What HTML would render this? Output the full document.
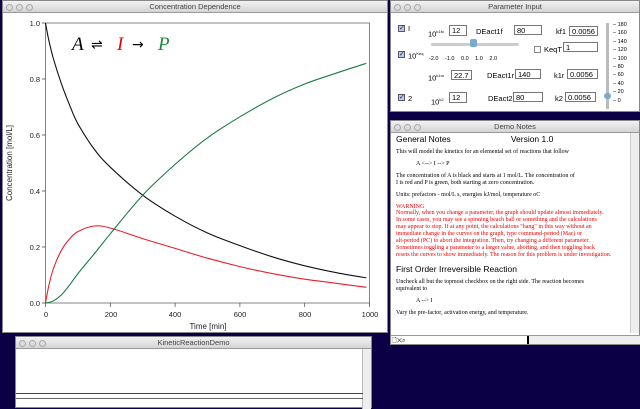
<!DOCTYPE html>
<html><head><meta charset="utf-8"><style>
*{margin:0;padding:0;box-sizing:border-box}
body{width:640px;height:408px;background:#0b0046;position:relative;overflow:hidden;font-family:"Liberation Sans",sans-serif}
.win{position:absolute;background:#fff;border:1px solid #888}
.tb{height:12px;background:linear-gradient(#f2f2f2,#d4d4d4);border-bottom:1px solid #999;font-size:7.5px;color:#444;text-align:center;line-height:12px;position:relative}
.dots{position:absolute;left:3px;top:2px}
.dots i{display:inline-block;width:7px;height:7px;border-radius:50%;background:#ddd;border:1px solid #aaa;margin-right:3px}
.a{position:absolute;white-space:nowrap}
.in{position:absolute;border:1px solid #777;background:#fff;font-size:7.5px;padding-left:2px;height:10px;line-height:9px}
.cb{position:absolute;width:7px;height:7px;border:1px solid #557;background:#bcd;font-size:7px;line-height:6px;color:#124}
.notes{font-family:"Liberation Serif",serif;font-size:6px;line-height:6.9px}
</style></head><body>

<div class="win" style="left:2px;top:0;width:386px;height:333px">
<div class="tb"><span class="dots"><i></i><i></i><i></i></span>Concentration Dependence</div>
<svg width="386" height="320" style="position:absolute;left:-1px;top:12px" font-family="Liberation Sans" font-size="7.5" fill="#222">
<rect x="43.5" y="10" width="324" height="280" fill="none" stroke="#666" stroke-width="0.8"/>
<g stroke="#444" stroke-width="0.7">
<path d="M40 10H43.5M40 66H43.5M40 122H43.5M40 178H43.5M40 234H43.5M40 290H43.5"/>
<path d="M43.5 290V294M108.3 290V294M173.1 290V294M237.9 290V294M302.7 290V294M367.5 290V294"/>
</g>
<g text-anchor="end">
<text x="38" y="13">1.0</text><text x="38" y="69">0.8</text><text x="38" y="125">0.6</text><text x="38" y="181">0.4</text><text x="38" y="237">0.2</text><text x="38" y="293">0.0</text></g>
<g text-anchor="middle">
<text x="44" y="304">0</text><text x="109" y="304">200</text><text x="173" y="304">400</text><text x="238" y="304">600</text><text x="303" y="304">800</text><text x="368" y="304">1000</text>
<text x="206" y="316" font-size="8">Time [min]</text></g>
<text transform="translate(10,150) rotate(-90)" text-anchor="middle" font-size="8">Concentration [mol/L]</text>
<text x="70" y="37" font-family="Liberation Serif" font-style="italic" font-size="19" fill="#000">A</text>
<text x="89" y="36" font-family="DejaVu Sans" font-size="14" fill="#000">⇌</text>
<text x="115" y="37" font-family="Liberation Serif" font-style="italic" font-size="19" fill="#e00">I</text>
<text x="130" y="36" font-family="DejaVu Sans" font-size="14" fill="#000">→</text>
<text x="156" y="37" font-family="Liberation Serif" font-style="italic" font-size="19" fill="#1a8a3a">P</text>
<g id="curves" fill="none" stroke-width="1.1"></g>
</svg>
</div>

<div class="win" style="left:15px;top:336px;width:357px;height:72px">
<div class="tb"><span class="dots"><i></i><i></i><i></i></span>KineticReactionDemo</div>
<div class="a" style="right:0;top:12px;width:9px;height:60px;background:#eee;border-left:1px solid #bbb"></div>
<div class="a" style="left:0;top:56px;width:347px;height:1px;background:#444"></div>
<div class="a" style="left:0;top:61px;width:347px;height:1px;background:#666"></div>
</div>

<div class="win" style="left:390px;top:0;width:250px;height:112px;font-size:7.5px">
<div class="tb"><span class="dots"><i></i><i></i><i></i></span>Parameter Input</div>
<div class="cb" style="left:7px;top:24px">✓</div><div class="a" style="left:17px;top:23px">I</div>
<div class="cb" style="left:7px;top:50px">✓</div><div class="a" style="left:17px;top:50px">10<sup style="font-size:4px">Keq</sup></div>
<div class="cb" style="left:7px;top:93px">✓</div><div class="a" style="left:17px;top:93px">2</div>
<div class="a" style="left:37px;top:28px">10<sup style="font-size:4px">k1fo</sup></div>
<div class="in" style="left:58px;top:24px;width:18px;height:11px">12</div>
<div class="a" style="left:85px;top:26px">DEact1f</div><div class="in" style="left:123px;top:24px;width:28px">80</div>
<div class="a" style="left:165px;top:26px">kf1</div><div class="in" style="left:178px;top:25px;width:29px">0.0056</div>
<div class="a" style="left:40px;top:42px;width:88px;height:3px;background:#ccc;border-radius:2px"></div>
<div class="a" style="left:79px;top:38px;width:7px;height:8px;background:#7ac;border-radius:2px"></div>
<div class="a" style="left:38px;top:55px;font-size:5.5px;word-spacing:5px">-2.0 -1.0 0.0 1.0 2.0</div>
<div class="a" style="left:143px;top:45px;width:7px;height:7px;border:1px solid #888"></div>
<div class="a" style="left:153px;top:44px">KeqT</div><div class="in" style="left:172px;top:41px;width:35px">1</div>
<div class="a" style="left:37px;top:72px">10<sup style="font-size:4px">k1ro</sup></div>
<div class="in" style="left:60px;top:69px;width:21px">22.7</div>
<div class="a" style="left:96px;top:70px">DEact1r</div><div class="in" style="left:124px;top:68px;width:26px">140</div>
<div class="a" style="left:163px;top:70px">k1r</div><div class="in" style="left:176px;top:68px;width:31px">0.0056</div>
<div class="a" style="left:40px;top:96px">10<sup style="font-size:4px">k2</sup></div>
<div class="in" style="left:58px;top:91px;width:18px;height:11px">12</div>
<div class="a" style="left:97px;top:93px">DEact2</div><div class="in" style="left:122px;top:91px;width:30px">80</div>
<div class="a" style="left:164px;top:93px">k2</div><div class="in" style="left:174px;top:91px;width:31px">0.0056</div>
<div class="a" style="left:215px;top:22px;width:3px;height:86px;background:#bbb"></div>
<div class="a" style="left:213px;top:92px;width:7px;height:6px;background:#7ac;border-radius:3px"></div>
<div class="a" style="left:222px;top:20px;font-size:5.5px;line-height:8.4px">– 180<br>– 160<br>– 140<br>– 120<br>– 100<br>– 80<br>– 60<br>– 40<br>– 20<br>– 0</div>
</div>

<div class="win" style="left:390px;top:120px;width:250px;height:225px">
<div class="tb"><span class="dots"><i></i><i></i><i></i></span>Demo Notes</div>
<div class="a" style="right:0;top:12px;width:9px;height:200px;background:#eee;border-left:1px solid #ccc"></div>
<div class="a" style="left:0;bottom:0;width:250px;height:9px;background:#eee;border-top:1px solid #999"></div>
<div class="a" style="left:1px;bottom:0;width:137px;height:8px;background:#fff;border-right:2px solid #000;font-size:6px">🗋✕⌕</div>
<div class="a notes" style="left:5px;top:13px;width:235px">
<div style="font-family:'Liberation Sans';font-size:8.5px;line-height:11px">General Notes<span style="margin-left:60px">Version 1.0</span></div>
<div style="margin-top:4px">This will model the kinetics for an elemental set of reactions that follow</div>
<div style="margin:5px 0 0 20px">A &lt;--&gt; I --&gt; P</div>
<div style="margin-top:5px">The concentration of A is black and starts at 1 mol/L. The concentration of<br>I is red and P is green, both starting at zero concentration.</div>
<div style="margin-top:5px">Units: prefactors - mol/L s, energies kJ/mol, temperature oC</div>
<div style="margin-top:5px;color:#e00">WARNING<br>Normally, when you change a parameter, the graph should update almost immediately.<br>In some cases, you may see a spinning beach ball or something and the calculations<br>may appear to stop. If at any point, the calculations "hang" in this way without an<br>immediate change in the curves on the graph, type command-period (Mac) or<br>alt-period (PC) to abort the integration. Then, try changing a different parameter.<br>Sometimes toggling a parameter to a larger value, aborting, and then toggling back<br>resets the curves to show immediately. The reason for this problem is under investigation.</div>
<div style="font-family:'Liberation Sans';font-size:8.5px;line-height:11px;margin-top:5px">First Order Irreversible Reaction</div>
<div style="margin-top:4px">Uncheck all but the topmost checkbox on the right side. The reaction becomes<br>equivalent to</div>
<div style="margin:5px 0 0 20px">A --&gt; I</div>
<div style="margin-top:5px">Vary the pre-factor, activation energy, and temperature.</div>
</div>
</div>

<script>
var T=[0,10,25,50,75,100,150,200,300,400,500,600,700,800,900,990];
var A=[1,.94,.87,.78,.705,.64,.55,.485,.385,.31,.25,.205,.165,.133,.108,.09];
var I=[0,.06,.125,.19,.23,.255,.275,.268,.23,.195,.16,.13,.105,.085,.07,.056];
var P=[0,.002,.008,.03,.065,.105,.175,.247,.385,.495,.59,.665,.73,.782,.822,.856];
function path(V,c){var p=[];for(var i=0;i<T.length;i++)p.push([43.5+T[i]*0.324,290-V[i]*280]);
var d="M"+p[0][0].toFixed(1)+" "+p[0][1].toFixed(1);
for(var i=0;i<p.length-1;i++){var p0=p[i?i-1:0],p1=p[i],p2=p[i+1],p3=p[i+2<p.length?i+2:i+1];
var c1=[p1[0]+(p2[0]-p0[0])/6,p1[1]+(p2[1]-p0[1])/6],c2=[p2[0]-(p3[0]-p1[0])/6,p2[1]-(p3[1]-p1[1])/6];
d+="C"+c1[0].toFixed(1)+" "+c1[1].toFixed(1)+" "+c2[0].toFixed(1)+" "+c2[1].toFixed(1)+" "+p2[0].toFixed(1)+" "+p2[1].toFixed(1);}
return '<path d="'+d+'" stroke="'+c+'" stroke-linejoin="round"/>'}
document.getElementById("curves").innerHTML=path(A,"#111")+path(I,"#e8202a")+path(P,"#1d7a45");
</script>
</body></html>
